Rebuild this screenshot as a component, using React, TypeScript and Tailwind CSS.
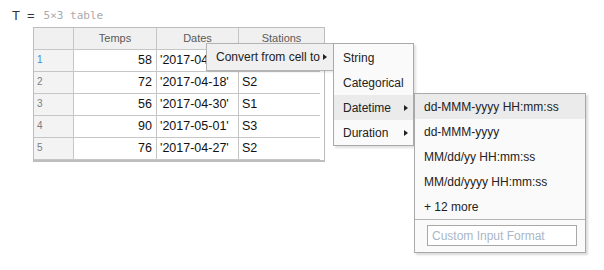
import React from 'react';

const rows = [
  { n: 1, temp: 58, date: "'2017-04-25'", station: 'S1' },
  { n: 2, temp: 72, date: "'2017-04-18'", station: 'S2' },
  { n: 3, temp: 56, date: "'2017-04-30'", station: 'S1' },
  { n: 4, temp: 90, date: "'2017-05-01'", station: 'S3' },
  { n: 5, temp: 76, date: "'2017-04-27'", station: 'S2' },
];

const convertTargets = [
  { label: 'String', sub: false, active: false },
  { label: 'Categorical', sub: false, active: false },
  { label: 'Datetime', sub: true, active: true },
  { label: 'Duration', sub: true, active: false },
];

const formats = ['dd-MMM-yyyy HH:mm:ss', 'dd-MMM-yyyy', 'MM/dd/yy HH:mm:ss', 'MM/dd/yyyy HH:mm:ss', '+ 12 more'];

const Arrow = () => (
  <span className="inline-block w-0 h-0 border-y-[3px] border-y-transparent border-l-[4px] border-l-[#222]" />
);

export default function App() {
  return (
    <div className="relative w-[604px] h-[270px] bg-white overflow-hidden font-['Liberation_Sans',Arial,sans-serif] text-[#111]">
      {/* Variable summary line */}
      <div className="h-[27px] pt-[8px] pl-[12px] flex items-start leading-[16px]">
        <span className="text-[13px] text-[#333]">T</span>
        <span className="text-[13px] text-[#333] ml-[7px]">=</span>
        <span className="ml-[9px] text-[11px] text-[#aaa] font-['DejaVu_Sans_Mono',monospace]">5×3 table</span>
      </div>

      {/* Table */}
      <div className="ml-[33px] w-[292px] border border-[#bdbdbd] border-b-2">
        <div className="flex h-[22px] bg-[#f0f0f0] border-b border-[#c6c6c6] text-[11px] text-[#5a5a5a]">
          <div className="w-[40px] border-r border-[#c6c6c6]" />
          <div className="w-[83px] border-r border-[#c6c6c6] flex items-center justify-center">Temps</div>
          <div className="w-[82px] border-r border-[#c6c6c6] flex items-center justify-center">Dates</div>
          <div className="flex-1 flex items-center justify-center">Stations</div>
        </div>
        {rows.map((r) => (
          <div key={r.n} className="flex h-[22px] text-[12.5px]">
            <div
              className={`w-[40px] bg-[#f3f3f3] border-r border-b border-[#c6c6c6] pl-[3px] pb-[3px] flex items-center text-[10px] ${
                r.n === 1 ? 'text-[#3d8bd1]' : 'text-[#7d7d7d]'
              }`}
            >
              {r.n}
            </div>
            <div className="w-[83px] border-r border-b border-[#c6c6c6] flex items-center justify-end pr-[4px]">{r.temp}</div>
            <div className="w-[82px] border-r border-b border-[#c6c6c6] flex items-center pl-[3px]">{r.date}</div>
            <div className="w-[81px] border-b border-[#c6c6c6] flex items-center pl-[3px]">{r.station}</div>
            <div className="flex-1" />
          </div>
        ))}
      </div>

      {/* Context menu: level 1 */}
      <div className="absolute left-[206px] top-[43px] w-[128px] h-[28px] bg-[#f0f0f0] border border-[#b4b4b4] shadow-[1px_1px_2px_rgba(0,0,0,0.12)] flex items-center pl-[9px] pr-[6px] text-[12px] text-[#222]">
        <span className="flex-1">Convert from cell to</span>
        <Arrow />
      </div>

      {/* Context menu: level 2 */}
      <div className="absolute left-[333px] top-[43px] w-[81px] h-[103px] bg-[#fafafa] border border-[#a9a9a9] shadow-[2px_2px_2px_rgba(0,0,0,0.12)] pt-[1px] text-[12px] text-[#222]">
        {convertTargets.map((t) => (
          <div
            key={t.label}
            className={`h-[25px] flex items-center pl-[9px] pr-[5px] ${t.active ? 'bg-[#ebebeb]' : ''}`}
          >
            <span className="flex-1">{t.label}</span>
            {t.sub && <Arrow />}
          </div>
        ))}
      </div>

      {/* Context menu: level 3 */}
      <div className="absolute left-[414px] top-[93px] w-[172px] h-[160px] bg-[#fafafa] border border-[#a9a9a9] shadow-[2px_2px_2px_rgba(0,0,0,0.15)] text-[12px] text-[#222]">
        {formats.map((f, i) => (
          <div key={f} className={`h-[25px] flex items-center pl-[9px] ${i === 0 ? 'bg-[#ebebeb]' : ''}`}>
            {f}
          </div>
        ))}
        <div className="border-t border-[#b4b4b4] pt-[5px] pl-[12px]">
          <input
            readOnly
            placeholder="Custom Input Format"
            className="w-[150px] h-[21px] bg-white border border-[#a8a8a8] px-[4px] text-[12px] outline-none placeholder:text-[#a9b7c6]"
          />
        </div>
      </div>
    </div>
  );
}
